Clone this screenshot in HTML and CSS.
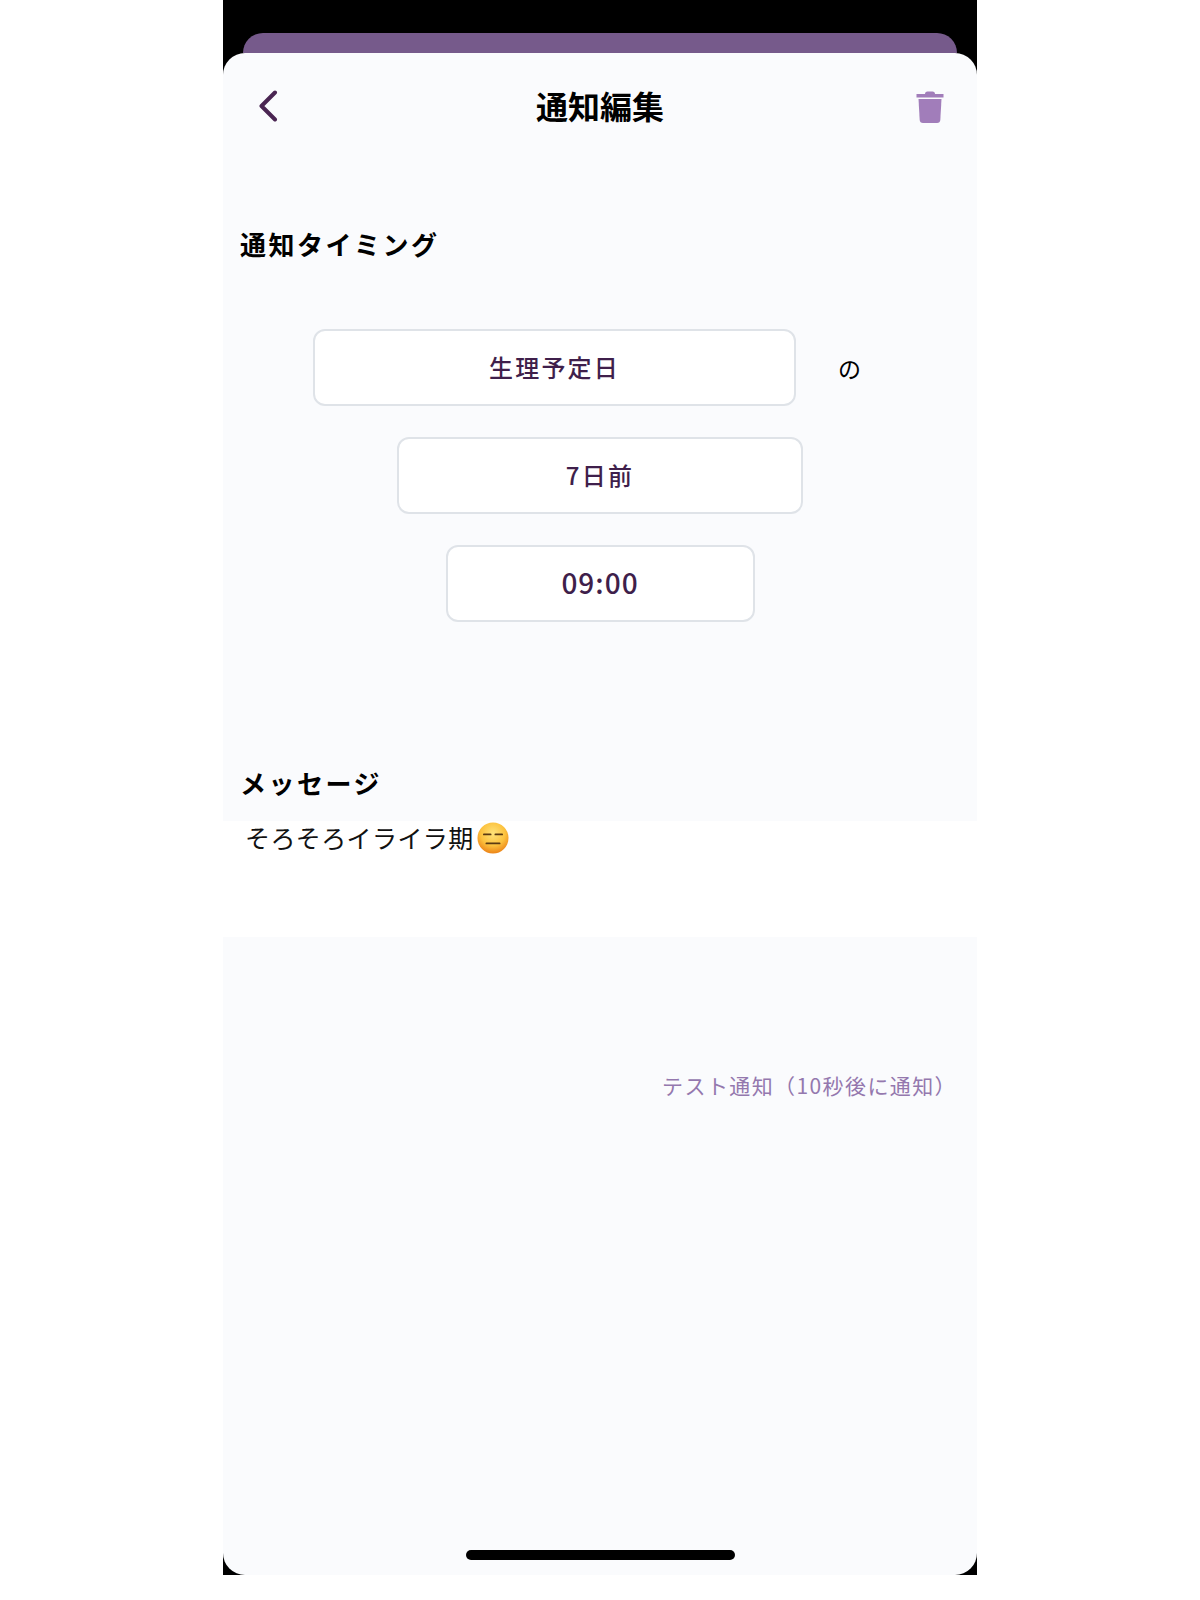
FILE: index.html
```html
<!DOCTYPE html>
<html lang="ja">
<head>
<meta charset="UTF-8" />
<meta name="viewport" content="width=device-width, initial-scale=1" />
<title>通知編集</title>
<link rel="stylesheet" href="styles.css">
</head>
<body>
<div class="phone">
  <div class="back-sheet"></div>

  <div class="sheet">
    <!-- Header -->
    <div class="header">
      <svg class="icon-back" width="20" height="32" viewBox="0 0 20 32">
        <path d="M17 2.5 L3.5 16 L17 29.5" fill="none" stroke="#4a2552" stroke-width="4" stroke-linecap="round" stroke-linejoin="round" />
      </svg>
      <div class="title">通知編集</div>
      <svg class="icon-trash" width="28" height="32" viewBox="0 0 28 32">
        <path d="M9 3 Q9 0.5 11.5 0.5 L16.5 0.5 Q19 0.5 19 3 L27.5 3 L27.5 6.5 L0.5 6.5 L0.5 3 Z" fill="#a17dba" />
        <path d="M2.5 8 L25.5 8 L24.3 29 Q24.1 32 21 32 L7 32 Q3.9 32 3.7 29 Z" fill="#a17dba" />
      </svg>
    </div>

    <!-- Timing -->
    <div class="section-title timing-title">通知タイミング</div>
    <div class="fields">
      <div class="field-row field-row-first">
        <div class="field field-day">生理予定日</div>
        <span class="suffix">の</span>
      </div>
      <div class="field field-offset">7日前</div>
      <div class="field field-time">09:00</div>
    </div>

    <!-- Message -->
    <div class="section-title message-title">メッセージ</div>
    <div class="message">
      <span>そろそろイライラ期</span>
      <svg class="emoji" width="32" height="32" viewBox="0 0 32 32" role="img" aria-label="😑">
        <defs>
          <radialGradient id="face" cx="50%" cy="35%" r="65%">
            <stop offset="0%" stop-color="#fee27a" />
            <stop offset="60%" stop-color="#fcc23e" />
            <stop offset="100%" stop-color="#ec8418" />
          </radialGradient>
        </defs>
        <circle cx="16" cy="16" r="15.5" fill="url(#face)" />
        <rect x="6" y="11.5" width="8.5" height="1.8" rx="0.9" fill="#5b3a12" />
        <rect x="17.5" y="11.5" width="8.5" height="1.8" rx="0.9" fill="#5b3a12" />
        <rect x="8.5" y="20.5" width="15" height="1.8" rx="0.9" fill="#5b3a12" />
      </svg>
    </div>

    <div class="test-link">テスト通知（10秒後に通知）</div>

    <div class="home-bar"></div>
  </div>
</div>
</body>
</html>
```

FILE: styles.css
```css
/* Reset & base */
* {
  box-sizing: border-box;
}
body {
  margin: 0;
  background: #fff;
  font-family: "Noto Sans CJK JP", "Noto Sans", sans-serif;
  color: #000;
}

.phone {
  width: 754px;
  height: 1575px;
  margin: 0 auto;
  padding-top: 33px;
  background: #000;
  display: flex;
  flex-direction: column;
}

.back-sheet {
  height: 20px;
  margin: 0 20px;
  background: #765a8b;
  border-radius: 20px 20px 0 0;
}

.sheet {
  flex: 1;
  display: flex;
  flex-direction: column;
  background: #fafbfd;
  border-radius: 22px;
}

/* Header */
.header {
  height: 108px;
  padding: 0 33px 4px 35px;
  display: flex;
  align-items: center;
  justify-content: space-between;
}

.icon-back {
  margin: 2px 6px 0 0;
}

.icon-trash {
  margin-top: 4px;
}

.title {
  font-size: 32px;
  font-weight: 700;
  line-height: 40px;
}

.section-title {
  height: 36px;
  padding-left: 17px;
  font-size: 26px;
  font-weight: 700;
  line-height: 34px;
  letter-spacing: 2.5px;
}

.timing-title {
  margin-top: 66px;
}

.message-title {
  margin-top: 144px;
}

/* Timing fields */
.fields {
  margin-top: 66px;
  display: flex;
  flex-direction: column;
  align-items: center;
  gap: 31px;
}

.field-row {
  align-self: stretch;
  display: flex;
  align-items: center;
  padding-left: 90px;
}

.field {
  height: 77px;
  padding-bottom: 3px;
  display: flex;
  align-items: center;
  justify-content: center;
  background: #fff;
  border: 2px solid #dfe3e8;
  border-radius: 12px;
  color: #3f1f4b;
  font-size: 24px;
  font-weight: 500;
  letter-spacing: 2.2px;
}

.field-day {
  width: 483px;
}

.field-offset {
  width: 406px;
}

.field-time {
  width: 309px;
  font-size: 28px;
  letter-spacing: 1px;
}

.suffix {
  margin-left: 42px;
  font-size: 23px;
}

/* Message */
.message {
  height: 116px;
  margin-top: 19px;
  padding-left: 22px;
  display: flex;
  align-items: flex-start;
  background: #fff;
  font-size: 25px;
  line-height: 32px;
  letter-spacing: 0.4px;
  color: #111;
}

.emoji {
  margin-left: 3px;
  margin-top: 1px;
}

.test-link {
  height: 32px;
  margin-top: 132px;
  padding-right: 20px;
  text-align: right;
  font-size: 21px;
  line-height: 32px;
  letter-spacing: 1.4px;
  color: #9478ae;
}

.home-bar {
  width: 269px;
  height: 10px;
  margin: auto auto 15px;
  background: #000;
  border-radius: 5px;
}
```
